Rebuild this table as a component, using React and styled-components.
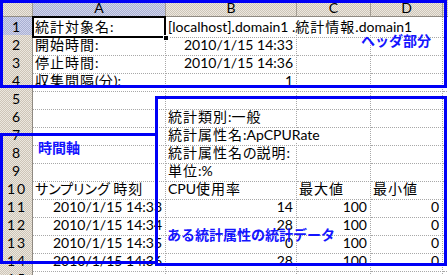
import React from 'react';
import styled, { createGlobalStyle, css } from 'styled-components';

const GlobalStyle = createGlobalStyle`
  html, body {
    margin: 0;
    padding: 0;
    background: #fff;
  }
  body {
    font-family: Lato, "Noto Sans CJK JP", sans-serif;
  }
`;

const COLUMNS = ['A', 'B', 'C', 'D'];
const TRACKS = '33px 133px 131px 74px 72px 40px';

// one entry per row, cells A-D; null = empty cell
const ROWS = [
  [{ t: '統計対象名:', active: true }, { t: '[localhost].domain1 .統計情報.domain1', span: 3 }],
  [{ t: '開始時間:' }, { t: '2010/1/15 14:33', right: true }, null, null],
  [{ t: '停止時間:' }, { t: '2010/1/15 14:36', right: true }, null, null],
  [{ t: '収集間隔(分):' }, { t: '1', right: true }, null, null],
  [null, null, null, null],
  [null, { t: '統計類別:一般' }, null, null],
  [null, { t: '統計属性名:ApCPURate', span: 2 }, null],
  [null, { t: '統計属性名の説明:' }, null, null],
  [null, { t: '単位:%' }, null, null],
  [{ t: 'サンプリング 時刻' }, { t: 'CPU使用率' }, { t: '最大値' }, { t: '最小値' }],
  [{ t: '2010/1/15 14:33', right: true }, { t: '14', right: true }, { t: '100', right: true }, { t: '0', right: true }],
  [{ t: '2010/1/15 14:34', right: true }, { t: '28', right: true }, { t: '100', right: true }, { t: '0', right: true }],
  [{ t: '2010/1/15 14:35', right: true }, { t: '0', right: true }, { t: '100', right: true }, { t: '0', right: true }],
  [{ t: '2010/1/15 14:36', right: true }, { t: '28', right: true }, { t: '100', right: true }, { t: '0', right: true }],
  [null, null, null, null],
];

const Sheet = styled.div`
  position: relative;
  width: 448px;
  height: 275px;
  overflow: hidden;
  display: flex;
  flex-direction: column;
  background: #fff;
  color: #000;
  font-size: 14px;
`;

const Row = styled.div`
  display: grid;
  grid-template-columns: ${TRACKS};
  height: ${(p) => (p.$head ? 17 : 18)}px;
  flex: none;
`;

const headerFace = css`
  box-sizing: border-box;
  background-color: ${(p) => (p.$selected ? '#b9bfdc' : '#d9d2c7')};
  background-image: ${(p) =>
    p.$selected
      ? 'repeating-conic-gradient(#cfd3ec 0 25%, #a9b0d2 0 50%)'
      : 'repeating-conic-gradient(#ece7de 0 25%, #cdc5b8 0 50%)'};
  background-size: 2px 2px;
  font-size: 14px;
  letter-spacing: 2px;
  padding-left: 2px;
  color: #000;
  text-align: center;
`;

const ColHead = styled.div`
  ${headerFace}
  border-right: 1px solid #a39d93;
  border-bottom: 1px solid #8f8a82;
  line-height: 16px;
`;

const RowHead = styled.div`
  ${headerFace}
  border-right: 1px solid #8f8a82;
  border-bottom: 1px solid #b3ada3;
  line-height: 20px;
`;

const Cell = styled.div`
  position: relative;
  box-sizing: border-box;
  grid-column: ${(p) => (p.$span ? `span ${p.$span}` : 'auto')};
  border-right: 1px dotted #a8a8a8;
  border-bottom: 1px dotted #a8a8a8;
  padding: 0 3px 0 2px;
  line-height: 19px;
  white-space: nowrap;
  text-align: ${(p) => (p.$right ? 'right' : 'left')};

  ${(p) =>
    p.$active &&
    css`
      z-index: 1;
      &::after {
        content: '';
        position: absolute;
        inset: -1px;
        border: 2px solid #000;
      }
      &::before {
        content: '';
        position: absolute;
        right: -4px;
        bottom: -4px;
        width: 4px;
        height: 4px;
        background: #000;
        border: 1px solid #fff;
        z-index: 2;
      }
    `}
`;

// kanji are set a little looser, kana proportional, as in the old bitmap font
const Kanji = styled.span`
  letter-spacing: 1px;
`;

const Kana = styled.span`
  font-feature-settings: "palt";
`;

const Frame = styled.div`
  position: absolute;
  box-sizing: border-box;
  left: ${(p) => p.$x}px;
  top: ${(p) => p.$y}px;
  width: ${(p) => p.$w}px;
  height: ${(p) => p.$h}px;
  border: 3px solid #0000f6;
  pointer-events: none;
  z-index: 3;
`;

const Note = styled.span`
  position: absolute;
  left: ${(p) => p.$x}px;
  top: ${(p) => p.$y}px;
  font-family: "Noto Sans CJK JP", sans-serif;
  font-size: 14px;
  font-weight: 700;
  line-height: 16px;
  color: #1414ff;
  white-space: nowrap;
  z-index: 4;
`;

function Text({ value }) {
  if (!value) return null;
  return value.split(/([\u4e00-\u9fff]+|[\u3040-\u30ff]+)/).map((part, i) => {
    if (!part) return null;
    if (/[\u4e00-\u9fff]/.test(part)) return <Kanji key={i}>{part}</Kanji>;
    if (/[\u3040-\u30ff]/.test(part)) return <Kana key={i}>{part}</Kana>;
    return part;
  });
}

export default function App() {
  return (
    <>
      <GlobalStyle />
      <Sheet>
        <Row $head>
          <ColHead />
          {COLUMNS.map((c) => (
            <ColHead key={c} $selected={c === 'A'}>
              {c}
            </ColHead>
          ))}
          <ColHead />
        </Row>
        {ROWS.map((cells, i) => (
          <Row key={i}>
            <RowHead $selected={i === 0}>{i + 1}</RowHead>
            {cells.map((c, j) => (
              <Cell key={j} $span={c?.span} $right={c?.right} $active={c?.active}>
                <Text value={c?.t} />
              </Cell>
            ))}
            <Cell />
          </Row>
        ))}

        <Frame $x={0} $y={0} $w={447} $h={88} />
        <Frame $x={0} $y={133} $w={158} $h={131} />
        <Frame $x={155} $y={96} $w={292} $h={170} />

        <Note $x={361} $y={32}>ヘッダ部分</Note>
        <Note $x={38} $y={139}>時間軸</Note>
        <Note $x={167} $y={226}>ある統計属性の統計データ</Note>
      </Sheet>
    </>
  );
}
